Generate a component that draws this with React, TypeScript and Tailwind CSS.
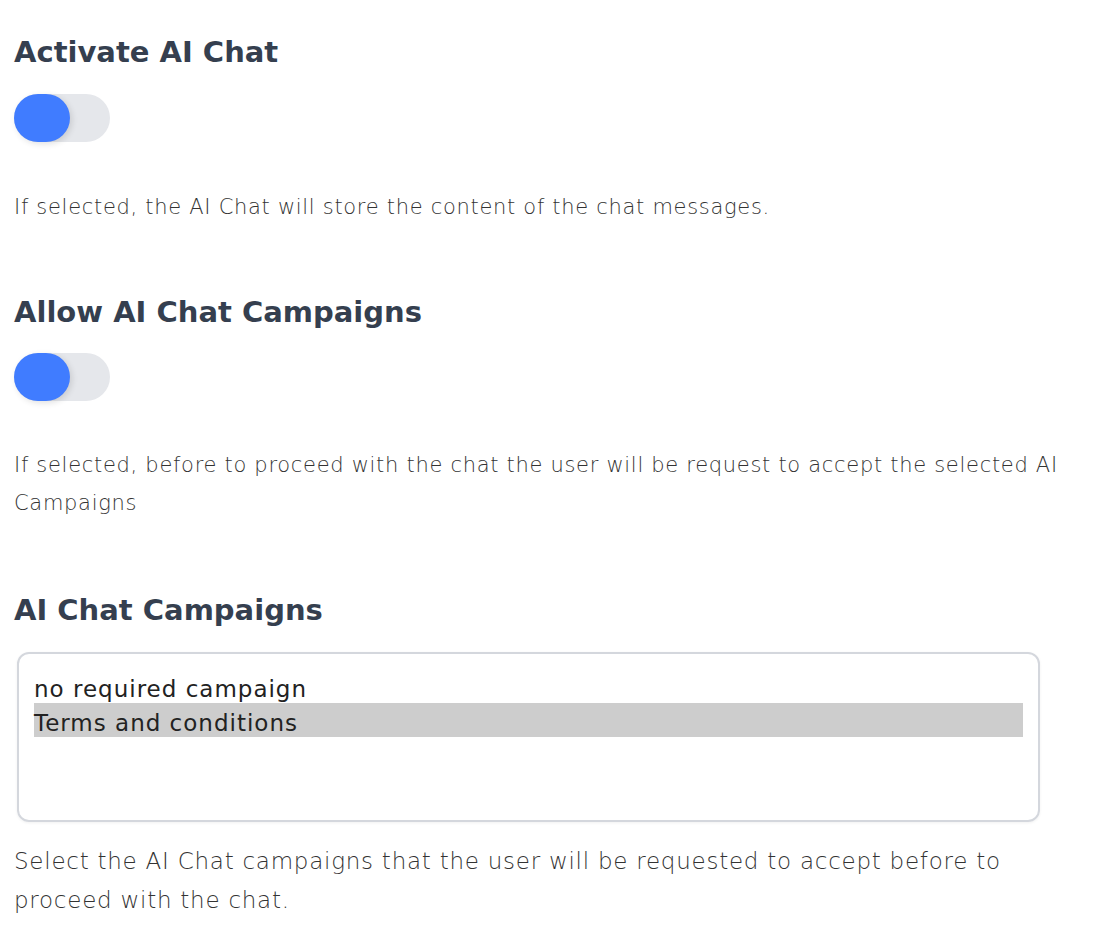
const baseFont = { fontFamily: '"DejaVu Sans", "Open Sans", sans-serif' };

function Toggle() {
  return (
    <div className="flex h-[48px] w-[96px] rounded-full bg-[#e5e7eb]">
      <div className="h-[48px] w-[56px] rounded-full bg-[#407cff] shadow-[2px_2px_6px_rgba(0,0,0,0.12)]" />
    </div>
  );
}

function Heading({ children }: { children: string }) {
  return (
    <h2 className="text-[29px] font-bold leading-[40px] text-[#353f4f]">{children}</h2>
  );
}

function Help({ children, large }: { children: string; large?: boolean }) {
  return (
    <p
      className={`font-extralight text-[#333] ${
        large ? "text-[23px] leading-[39px] tracking-[0.75px]" : "text-[21px] leading-[38px] tracking-[0.7px]"
      }`}
    >
      {children}
    </p>
  );
}

const campaigns = [
  { label: "no required campaign", selected: false },
  { label: "Terms and conditions", selected: true },
];

export default function App() {
  return (
    <div className="w-[1074px] bg-white pl-[14px] pt-[32px]" style={baseFont}>
      <Heading>Activate AI Chat</Heading>
      <div className="mt-[22px]">
        <Toggle />
      </div>
      <div className="mt-[46px]">
        <Help>If selected, the AI Chat will store the content of the chat messages.</Help>
      </div>

      <div className="mt-[66px]">
        <Heading>Allow AI Chat Campaigns</Heading>
      </div>
      <div className="mt-[21px]">
        <Toggle />
      </div>
      <div className="mt-[45px]">
        <Help>
          If selected, before to proceed with the chat the user will be request to accept the selected AI Campaigns
        </Help>
      </div>

      <div className="mt-[68px]">
        <Heading>AI Chat Campaigns</Heading>
      </div>
      <div className="ml-[3px] mt-[22px] h-[170px] w-[1023px] rounded-[12px] border-2 border-[#d4d7dd] px-[15px] pt-[15px] shadow-[0_1px_3px_rgba(0,0,0,0.06)]">
        {campaigns.map((c) => (
          <div
            key={c.label}
            className={`flex h-[34px] items-center pt-[6px] text-[23px] leading-[28px] tracking-[1px] text-[#222] ${
              c.selected ? "bg-[#cdcdcd]" : ""
            }`}
          >
            {c.label}
          </div>
        ))}
      </div>
      <div className="mt-[20px]">
        <Help large>
          Select the AI Chat campaigns that the user will be requested to accept before to proceed with the chat.
        </Help>
      </div>
    </div>
  );
}
